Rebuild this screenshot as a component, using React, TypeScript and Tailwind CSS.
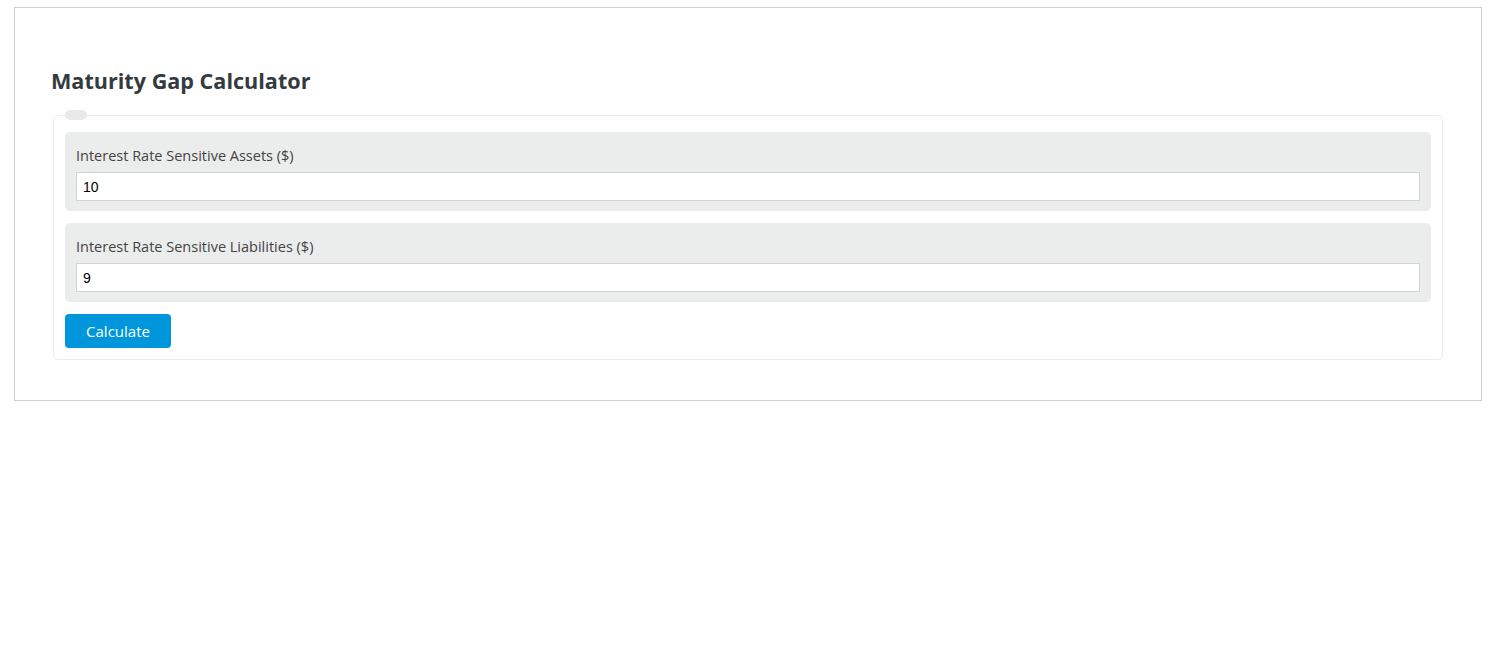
export default function App() {
  return (
    <div className="min-h-[648px] bg-white pt-[7px] pl-[14px]" style={{ fontFamily: '"Open Sans", "Noto Sans", sans-serif' }}>
      <div className="w-[1468px] h-[394px] border border-[#cfcfcf] px-[38px] pt-[58px]">
        <h2 className="ml-[-2px] text-[21.6px] leading-[30px] font-bold text-[#333a40]">Maturity Gap Calculator</h2>
        <fieldset className="mt-[14px] border border-[#ebebeb] rounded-[5px] px-[11px] pb-[11px]">
          <legend className="ml-0 h-[10px] w-[22px] rounded-full bg-[#e8e9e9]"></legend>
          <div className="pt-[12px] flex flex-col gap-[12px]">
            {[
              { label: 'Interest Rate Sensitive Assets ($)', value: '10' },
              { label: 'Interest Rate Sensitive Liabilities ($)', value: '9' },
            ].map(f => (
              <div key={f.label} className="bg-[#ebecec] rounded-[5px] px-[11px] pt-[14px] pb-[10px]">
                <label className="block text-[14.5px] leading-[20px] text-[#444] mb-[6px]">{f.label}</label>
                <input
                  defaultValue={f.value}
                  className="block w-full h-[29px] bg-white border border-[#d3d3d3] px-[6px] text-[14px] text-black outline-none"
                  style={{ fontFamily: '"Liberation Sans", Arial, sans-serif' }}
                />
              </div>
            ))}
            <div>
              <button className="w-[106px] h-[34px] rounded-[4px] bg-[#0096db] text-white text-[15px]">Calculate</button>
            </div>
          </div>
        </fieldset>
      </div>
    </div>
  );
}
